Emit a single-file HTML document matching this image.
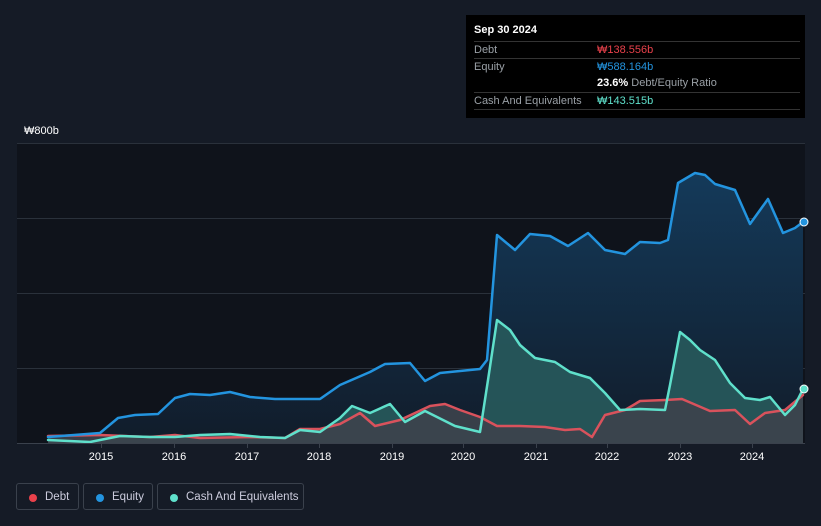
<!DOCTYPE html>
<html><head><meta charset="utf-8"><style>
body{margin:0;width:821px;height:526px;background:#151b26;font-family:"Liberation Sans",sans-serif;overflow:hidden;position:relative}
.tt{position:absolute;left:466px;top:15px;width:339px;height:103px;background:#000;color:#fff;font-size:11px}
.tt .r{position:absolute;left:8px;width:326px;border-top:1px solid #333;height:17px;line-height:17px}
.lab{color:#9aa0a6}
.v{position:absolute;left:123px}
.lg{position:absolute;top:483px;height:27px;border:1px solid #3a414c;border-radius:3px;color:#ccd;font-size:11.5px;line-height:27px;box-sizing:border-box}
.lg i{position:absolute;left:12px;top:10px;width:8px;height:8px;border-radius:50%}
.lg span{position:absolute;left:28px}
.ax{position:absolute;color:#fff;font-size:11px}
</style></head><body>
<div class="tt">
<div style="position:absolute;left:8px;top:9px;font-weight:bold;font-size:11px">Sep 30 2024</div>
<div class="r" style="top:26px"><span class="lab">Debt</span><span class="v" style="color:#e9414b">₩138.556b</span></div>
<div class="r" style="top:43px"><span class="lab">Equity</span><span class="v" style="color:#2394df">₩588.164b</span></div>
<div class="r" style="top:60px;border:none"><span class="v"><b>23.6%</b> <span class="lab">Debt/Equity Ratio</span></span></div>
<div class="r" style="top:77px"><span class="lab">Cash And Equivalents</span><span class="v" style="color:#5fe0cb">₩143.515b</span></div>
<div class="r" style="top:94px;height:0"></div>
</div>
<div class="ax" style="left:24px;top:125px">₩800b</div>
<div class="ax" style="left:24px;top:425px">₩0</div>
<svg width="821" height="526" style="position:absolute;left:0;top:0">
<rect x="17" y="143" width="788" height="300" fill="#0f131b"/>
<g stroke="#2a313b" stroke-width="1"><line x1="17" y1="143.5" x2="805" y2="143.5"/><line x1="17" y1="218.5" x2="805" y2="218.5"/><line x1="17" y1="293.5" x2="805" y2="293.5"/><line x1="17" y1="368.5" x2="805" y2="368.5"/></g>
<defs><linearGradient id="g" x1="0" y1="0" x2="0" y2="1"><stop offset="0" stop-color="#143a5a"/><stop offset="1" stop-color="#111c2a"/></linearGradient></defs>
<polygon fill="url(#g)" points="48,437 100,433 118,418 135,415 158,414 175,398 190,394 210,395 230,392 250,397 275,399 300,399 320,399 340,385 370,372 385,364 410,363 425,381 440,373 480,369 487,360 497,235 515,250 530,234 550,236 568,246 588,233 605,250 625,254 640,242 660,243 668,240 678,183 695,173 705,175 715,184 735,190 750,224 768,199 783,233 795,228 803,222 803,443 48,443"/>
<polygon fill="#285a5c" opacity="0.9" points="48,440 90,442 120,436 150,437 175,437 200,435 230,434 260,437 285,438 300,430 320,432 340,418 352,406 370,413 390,404 405,422 425,411 455,426 480,432 488,380 497,320 510,330 520,345 535,358 555,362 570,372 590,378 605,393 620,410 640,409 665,410 670,385 680,332 690,340 700,350 715,360 730,383 745,398 760,400 770,397 785,415 795,405 803,389 803,443 48,443"/>
<polygon fill="#3d434d" opacity="0.9" points="48,436 100,435 150,437 175,435 200,438 250,437 285,438 300,429 320,429 340,424 360,413 375,426 400,420 430,406 445,404 460,410 480,417 497,426 520,426 545,427 565,430 580,429 592,437 605,415 625,410 640,401 665,400 682,399 710,411 735,410 750,424 765,413 785,410 803,395 803,443 48,443"/>
<g fill="none" stroke-width="2.5" stroke-linejoin="round" stroke-linecap="round">
<polyline stroke="#d9525c" points="48,436 100,435 150,437 175,435 200,438 250,437 285,438 300,429 320,429 340,424 360,413 375,426 400,420 430,406 445,404 460,410 480,417 497,426 520,426 545,427 565,430 580,429 592,437 605,415 625,410 640,401 665,400 682,399 710,411 735,410 750,424 765,413 785,410 803,395"/>
<polyline stroke="#5fe0cb" points="48,440 90,442 120,436 150,437 175,437 200,435 230,434 260,437 285,438 300,430 320,432 340,418 352,406 370,413 390,404 405,422 425,411 455,426 480,432 488,380 497,320 510,330 520,345 535,358 555,362 570,372 590,378 605,393 620,410 640,409 665,410 670,385 680,332 690,340 700,350 715,360 730,383 745,398 760,400 770,397 785,415 795,405 803,389"/>
<polyline stroke="#2394df" points="48,437 100,433 118,418 135,415 158,414 175,398 190,394 210,395 230,392 250,397 275,399 300,399 320,399 340,385 370,372 385,364 410,363 425,381 440,373 480,369 487,360 497,235 515,250 530,234 550,236 568,246 588,233 605,250 625,254 640,242 660,243 668,240 678,183 695,173 705,175 715,184 735,190 750,224 768,199 783,233 795,228 803,222"/>
</g>
<circle cx="804" cy="222" r="4" fill="#2394df" stroke="#fff" stroke-width="1"/>
<circle cx="804" cy="389" r="4" fill="#5fe0cb" stroke="#fff" stroke-width="1"/>
<line x1="17" y1="443.5" x2="805" y2="443.5" stroke="#3a414c"/>
<g stroke="#3a414c"><line x1="101.5" y1="443" x2="101.5" y2="448"/><line x1="174.5" y1="443" x2="174.5" y2="448"/><line x1="247.5" y1="443" x2="247.5" y2="448"/><line x1="319.5" y1="443" x2="319.5" y2="448"/><line x1="392.5" y1="443" x2="392.5" y2="448"/><line x1="463.5" y1="443" x2="463.5" y2="448"/><line x1="536.5" y1="443" x2="536.5" y2="448"/><line x1="607.5" y1="443" x2="607.5" y2="448"/><line x1="680.5" y1="443" x2="680.5" y2="448"/><line x1="752.5" y1="443" x2="752.5" y2="448"/></g>
<g fill="#fff" font-size="11" font-family="Liberation Sans,sans-serif" text-anchor="middle"><text x="101" y="460">2015</text><text x="174" y="460">2016</text><text x="247" y="460">2017</text><text x="319" y="460">2018</text><text x="392" y="460">2019</text><text x="463" y="460">2020</text><text x="536" y="460">2021</text><text x="607" y="460">2022</text><text x="680" y="460">2023</text><text x="752" y="460">2024</text></g>
</svg>
<div class="lg" style="left:16px;width:63px"><i style="background:#e9414b"></i><span>Debt</span></div>
<div class="lg" style="left:83px;width:70px"><i style="background:#2394df"></i><span>Equity</span></div>
<div class="lg" style="left:157px;width:147px"><i style="background:#5fe0cb"></i><span>Cash And Equivalents</span></div>
</body></html>
